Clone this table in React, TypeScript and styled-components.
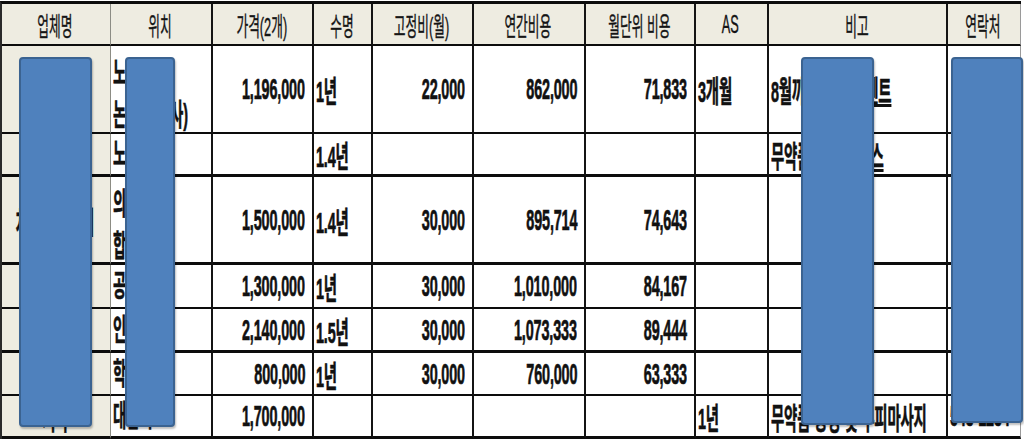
import React from "react";
import styled, { createGlobalStyle } from "styled-components";

type Align = "left" | "right" | "center";

interface RowData {
  height: number;
  line: number;
  name: string;
  place: string[];
  price?: string;
  life?: string;
  fixed?: string;
  yearly?: string;
  monthly?: string;
  as?: string;
  note?: React.ReactNode;
  contact?: string;
}

const COLS = [109, 102, 101, 59, 101, 112, 110, 73, 179, 73];
const HEADERS = ["업체명", "위치", "가격(2개)", "수명", "고정비(월)", "연간비용", "월단위 비용", "AS", "비고", "연락처"];

const ROWS: RowData[] = [
  {
    height: 88,
    line: 2,
    name: "스마일케어",
    place: ["노원구", "논현동(본사)"],
    price: "1,196,000",
    life: "1년",
    fixed: "22,000",
    yearly: "862,000",
    monthly: "71,833",
    as: "3개월",
    note: (
      <>
        8월까지 무료 <u>이벤트</u>
      </>
    ),
  },
  {
    height: 43,
    line: 3,
    name: "",
    place: ["노원점"],
    life: "1.4년",
    note: (
      <>
        무약품 무료 <u>서비스</u>
      </>
    ),
  },
  {
    height: 88,
    line: 3,
    name: "치아미백메디",
    place: ["의정부", "합정동"],
    price: "1,500,000",
    life: "1.4년",
    fixed: "30,000",
    yearly: "895,714",
    monthly: "74,643",
  },
  { height: 44, line: 2, name: "", place: ["공덕동"], price: "1,300,000", life: "1년", fixed: "30,000", yearly: "1,010,000", monthly: "84,167" },
  { height: 44, line: 3, name: "", place: ["인천"], price: "2,140,000", life: "1.5년", fixed: "30,000", yearly: "1,073,333", monthly: "89,444" },
  { height: 43, line: 2, name: "", place: ["학동"], price: "800,000", life: "1년", fixed: "30,000", yearly: "760,000", monthly: "63,333" },
  {
    height: 43,
    line: 3,
    name: "기타",
    place: ["대림역"],
    price: "1,700,000",
    as: "1년",
    note: "무약품 증정 및 두피마사지",
    contact: "543-1234",
  },
];

// blue boxes pasted over the private columns
const MASKS = [
  { x: 19, y: 57, w: 73, h: 370 },
  { x: 125, y: 57, w: 50, h: 370 },
  { x: 801, y: 57, w: 73, h: 368 },
  { x: 951, y: 57, w: 72, h: 366 },
];

const GlobalStyle = createGlobalStyle`
  html, body {
    margin: 0;
    padding: 0;
    background: #ffffff;
  }
  body {
    font-family: "Liberation Sans", "Noto Sans CJK KR", sans-serif;
    color: #111;
  }
`;

const Page = styled.div`
  position: relative;
  width: 1024px;
  height: 441px;
  padding-top: 1px;
  box-sizing: border-box;
  overflow: hidden;
  background: #fff;
`;

const Sheet = styled.div<{ $rows: string }>`
  display: grid;
  grid-template-columns: ${COLS.map((c) => `${c}px`).join(" ")};
  grid-template-rows: ${(p) => p.$rows};
  width: max-content;
  border-top: 3px solid #0c0c0c;
  border-left: 2px solid #2a2a2a;
`;

const Cell = styled.div<{ $align: Align; $col: number; $line: number; $beige?: boolean; $padTop?: number }>`
  box-sizing: border-box;
  display: flex;
  align-items: center;
  justify-content: ${(p) => (p.$align === "left" ? "flex-start" : p.$align === "right" ? "flex-end" : "center")};
  padding: ${(p) => p.$padTop ?? 0}px ${(p) => (p.$align === "right" ? 7 : 2)}px 0 ${(p) => (p.$align === "left" ? 2 : 0)}px;
  background: ${(p) => (p.$beige ? "#eeece1" : "#ffffff")};
  border-bottom: ${(p) => p.$line}px solid #0c0c0c;
  border-right: ${(p) => (p.$col === 0 ? "1px solid #8c8c84" : p.$col === COLS.length - 1 ? "1px solid #9a9a9a" : "2px solid #141414")};
  overflow: hidden;
  white-space: nowrap;
  font-size: 30px;
  font-weight: 700;
  letter-spacing: -0.3px;
  -webkit-text-stroke: 0.7px #111;
`;

const HeadCell = styled(Cell)`
  font-size: 26px;
  font-weight: 400;
  letter-spacing: 0;
  -webkit-text-stroke: 0.4px #222;
  background: #eeece1;
`;

const Txt = styled.span<{ $align: Align; $scale?: number }>`
  display: inline-block;
  flex: none;
  transform: scaleX(${(p) => p.$scale ?? 0.48});
  transform-origin: ${(p) => p.$align} center;
`;

const Lines = styled(Txt)`
  line-height: 42px;
`;

const Mask = styled.div<{ $x: number; $y: number; $w: number; $h: number }>`
  position: absolute;
  left: ${(p) => p.$x}px;
  top: ${(p) => p.$y}px;
  width: ${(p) => p.$w}px;
  height: ${(p) => p.$h}px;
  box-sizing: border-box;
  background: #4f81bd;
  border: 2px solid #3b6391;
  border-radius: 4px;
  box-shadow: 1px 2px 2px rgba(0, 0, 0, 0.25);
`;

function Data({ col, line, align, children, beige }: { col: number; line: number; align: Align; children?: React.ReactNode; beige?: boolean }) {
  return (
    <Cell $align={align} $col={col} $line={line} $beige={beige}>
      {children !== undefined && children !== "" && <Txt $align={align}>{children}</Txt>}
    </Cell>
  );
}

export default function App() {
  const rows = ["42px", ...ROWS.map((r) => `${r.height}px`)].join(" ");
  return (
    <Page>
      <GlobalStyle />
      <Sheet $rows={rows}>
        {HEADERS.map((h, i) => (
          <HeadCell key={h} $align="center" $col={i} $line={2}>
            <Txt $align="center" $scale={0.49}>
              {h}
            </Txt>
          </HeadCell>
        ))}
        {ROWS.map((r, i) => (
          <React.Fragment key={i}>
            <Data col={0} line={r.line} align="center" beige>
              {r.name}
            </Data>
            <Cell $align="left" $col={1} $line={r.line} $padTop={r.place.length > 1 ? 10 : 0}>
              <Lines $align="left">
                {r.place.map((p) => (
                  <div key={p}>{p}</div>
                ))}
              </Lines>
            </Cell>
            <Data col={2} line={r.line} align="right">{r.price}</Data>
            <Data col={3} line={r.line} align="left">{r.life}</Data>
            <Data col={4} line={r.line} align="right">{r.fixed}</Data>
            <Data col={5} line={r.line} align="right">{r.yearly}</Data>
            <Data col={6} line={r.line} align="right">{r.monthly}</Data>
            <Data col={7} line={r.line} align="left">{r.as}</Data>
            <Data col={8} line={r.line} align="left">{r.note}</Data>
            <Data col={9} line={r.line} align="left">{r.contact}</Data>
          </React.Fragment>
        ))}
      </Sheet>
      {MASKS.map((m, i) => (
        <Mask key={i} $x={m.x} $y={m.y} $w={m.w} $h={m.h} />
      ))}
    </Page>
  );
}
